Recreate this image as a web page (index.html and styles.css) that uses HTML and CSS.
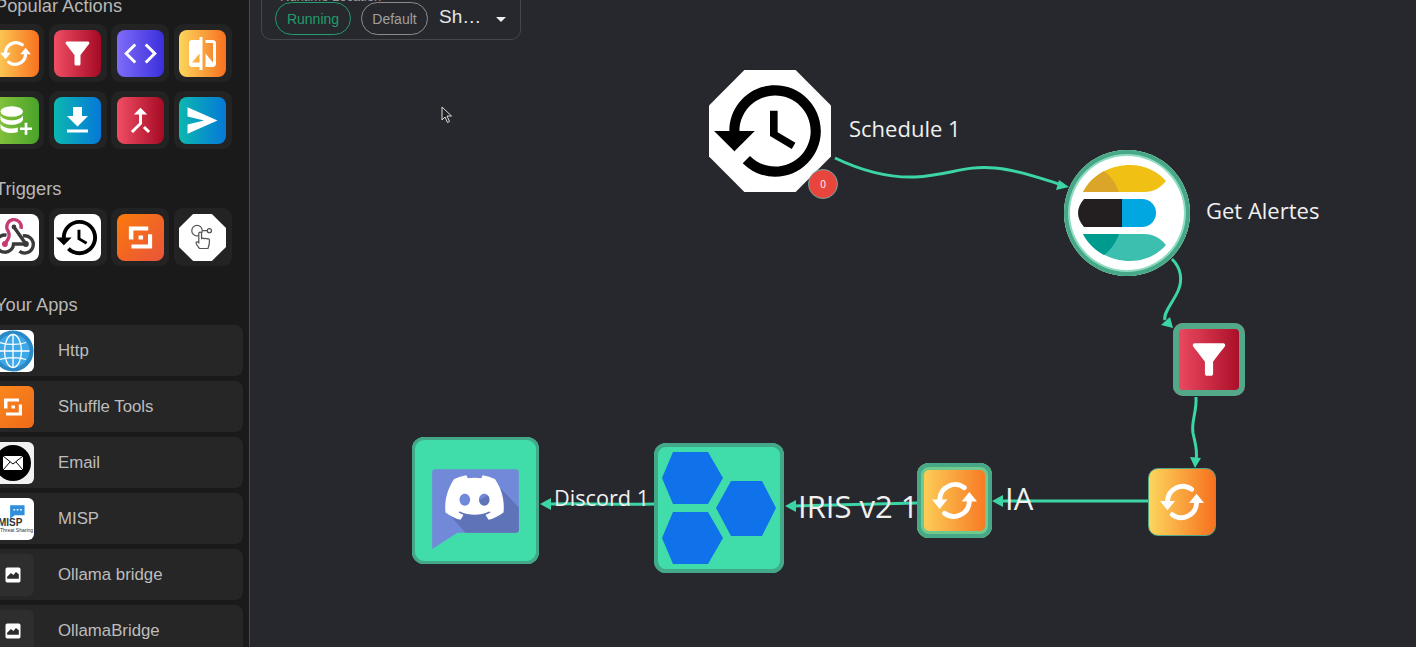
FILE: index.html
```html
<!DOCTYPE html>
<html lang="en">
<head>
    <meta charset="UTF-8">
    <title>Workflow editor</title>
    <link rel="stylesheet" href="styles.css">
</head>
<body>
    <svg class="defs">
        <symbol id="i-sync" viewBox="0 0 24 24">
            <path d="M16.5 6.2A7 7 0 0 0 5.3 11.500" fill="none" stroke="#fff" stroke-width="2.200" stroke-linecap="round"/>
            <path d="M1.800 11.500h7l-3.500 4.300z" fill="#fff"/>
            <path d="M7.500 17.800A7 7 0 0 0 18.700 12.500" fill="none" stroke="#fff" stroke-width="2.200" stroke-linecap="round"/>
            <path d="M15.200 12.500h7l-3.500-4.300z" fill="#fff"/>
        </symbol>
        <symbol id="i-filter" viewBox="0 0 24 24">
            <path d="M4.250 5.610C6.270 8.200 10 13 10 13v6c0 .55.45 1 1 1h2c.55 0 1-.45 1-1v-6s3.720-4.800 5.740-7.390c.51-.66.04-1.610-.79-1.610H5.040c-.83 0-1.300.95-.79 1.610z" fill="#fff"/>
        </symbol>
        <symbol id="i-code" viewBox="0 0 24 24">
            <path d="M8.500 6 2.500 12l6 6M15.500 6l6 6-6 6" fill="none" stroke="#fff" stroke-width="2"/>
        </symbol>
        <symbol id="i-compare" viewBox="0 0 24 24">
            <path d="M10 3H5c-1.100 0-2 .9-2 2v14c0 1.100.9 2 2 2h5v2h2V1h-2v2zm0 15H5l5-6v6zm9-15h-5v2h5v13l-5-6v9h5c1.100 0 2-.9 2-2V5c0-1.100-.9-2-2-2z" fill="#fff"/>
        </symbol>
        <symbol id="i-db" viewBox="0 0 24 24">
            <ellipse cx="9.500" cy="6" rx="7.500" ry="3.500" fill="#fff"/>
            <path d="M2 8.500c1 2.300 4 3.300 7.500 3.300s6.500-1 7.500-3.300v3c-1 2.300-4 3.300-7.500 3.300S3 13.800 2 11.500zM2 14c1 2.300 4 3.300 7.500 3.300 1.500 0 2.800-.2 4-.6v3c-1.200.4-2.500.6-4 .6-3.500 0-6.500-1-7.500-3.300z" fill="#fff"/>
            <path d="M19 13.500v8M15 17.500h8" stroke="#fff" stroke-width="1.800"/>
        </symbol>
        <symbol id="i-download" viewBox="0 0 24 24">
            <path d="M19 9h-4V3H9v6H5l7 7 7-7zM5 18v2h14v-2H5z" fill="#fff"/>
        </symbol>
        <symbol id="i-merge" viewBox="0 0 24 24">
            <path d="M17 20.410 18.410 19 15 15.590 13.590 17 17 20.410zM7.500 8H11v5.590L5.590 19 7 20.410l6-6V8h3.500L12 3.500 7.500 8z" fill="#fff"/>
        </symbol>
        <symbol id="i-send" viewBox="0 0 24 24">
            <path d="M2 3.200 22 12 2 20.800v-6.200L13 12 2 9.400z" fill="#fff"/>
        </symbol>
        <symbol id="i-history" viewBox="0 0 24 24">
            <path d="M13 3c-4.970 0-9 4.030-9 9H1l3.890 3.890.07.14L9 12H6c0-3.870 3.130-7 7-7s7 3.130 7 7-3.130 7-7 7c-1.930 0-3.680-.79-4.940-2.060l-1.420 1.420C8.270 19.990 10.510 21 13 21c4.970 0 9-4.030 9-9s-4.030-9-9-9zm-1 5v5l4.280 2.540.72-1.210-3.500-2.080V8H12z" fill="#000"/>
        </symbol>
        <symbol id="i-webhook" viewBox="0 0 24 24">
            <g fill="none" stroke-width="1.700">
                <path d="M11.200 6.600 17.300 15.300M15.800 11.200A4.400 4.400 0 1 1 14 19" stroke="#3a3a3a"/>
                <path d="M7.400 10.800A4.400 4.400 0 1 0 11 15.300H17.300" stroke="#3a3a3a"/>
                <path d="M6.600 15.300C8.200 12.800 9.600 11.500 8.300 8.800A3.700 3.700 0 1 1 14.800 7.600" stroke="#c73a73"/>
            </g>
            <circle cx="6.600" cy="15.300" r="1.500" fill="#c73a73"/>
            <circle cx="17.300" cy="15.300" r="1.500" fill="#3a3a3a"/>
            <circle cx="11.200" cy="6.600" r="1.200" fill="#3a3a3a"/>
        </symbol>
        <symbol id="i-shuffle" viewBox="0 0 24 24">
            <path d="M3 3.500h15v3H6.500v7H3zM21 9.500v11H5v-3h12.800v-8zM10.500 10.500h3.500v3h-3.500z" fill="#fff"/>
        </symbol>
        <symbol id="i-touch" viewBox="0 0 24 24">
            <circle cx="8" cy="7" r="3.800" fill="none" stroke="#555" stroke-width=".9"/>
            <circle cx="17" cy="7" r="1.500" fill="none" stroke="#555" stroke-width=".9"/>
            <path d="M11.800 7h3.700" stroke="#555" stroke-width=".9"/>
            <path d="M9.800 20c-1-1.500-2.500-3-2.500-4s1-1 2-.2V9c0-1.200 2-1.200 2 0v4.200c0-1 2-1 2 0 0-.8 2-.8 2 .2 .2-.8 1.800-.6 1.800.4 0 2-.2 4-1.100 6.200z" fill="#fff" stroke="#555" stroke-width=".9"/>
        </symbol>
        <symbol id="i-image" viewBox="0 0 24 24">
            <path d="M5 3h14a2 2 0 0 1 2 2v14a2 2 0 0 1-2 2H5a2 2 0 0 1-2-2V5a2 2 0 0 1 2-2zm0 11v2.500h14V11l-3.500-2.500-3 3.500-3-2.500z" fill="#fff" fill-rule="evenodd"/>
        </symbol>
    </svg>

    <div class="page">
        <aside class="sidebar">
            <div class="sidebar-inner">
                <h3 class="section-title first">Popular Actions</h3>
                <div class="tile-grid">
                    <div class="tile"><span class="tile-icon orange"><svg><use href="#i-sync"/></svg></span></div>
                    <div class="tile"><span class="tile-icon red"><svg><use href="#i-filter"/></svg></span></div>
                    <div class="tile"><span class="tile-icon purple"><svg><use href="#i-code"/></svg></span></div>
                    <div class="tile"><span class="tile-icon orange"><svg><use href="#i-compare"/></svg></span></div>
                    <div class="tile"><span class="tile-icon green"><svg><use href="#i-db"/></svg></span></div>
                    <div class="tile"><span class="tile-icon teal"><svg><use href="#i-download"/></svg></span></div>
                    <div class="tile"><span class="tile-icon red"><svg><use href="#i-merge"/></svg></span></div>
                    <div class="tile"><span class="tile-icon teal"><svg><use href="#i-send"/></svg></span></div>
                </div>

                <h3 class="section-title triggers">Triggers</h3>
                <div class="tile-grid">
                    <div class="tile"><span class="tile-icon white full"><svg><use href="#i-webhook"/></svg></span></div>
                    <div class="tile"><span class="tile-icon white full"><svg><use href="#i-history"/></svg></span></div>
                    <div class="tile"><span class="tile-icon shuffle"><svg><use href="#i-shuffle"/></svg></span></div>
                    <div class="tile"><span class="tile-icon white octagon"><svg><use href="#i-touch"/></svg></span></div>
                </div>

                <h3 class="section-title apps">Your Apps</h3>
                <div class="app-list">
                    <div class="app-row">
                        <span class="app-icon white">
                            <svg viewBox="0 0 42 42">
                                <circle cx="21" cy="21" r="18.500" fill="#3fa9e8" stroke="#2b8ac6" stroke-width="4"/>
                                <g fill="none" stroke="#fff" stroke-width="1.300">
                                    <ellipse cx="21" cy="21" rx="8.500" ry="16.500"/>
                                    <path d="M21 4v34M4.500 21h33M8 12.500c7 2.500 19 2.500 26 0M8 29.500c7-2.500 19-2.500 26 0"/>
                                </g>
                            </svg>
                        </span>
                        <span class="app-name">Http</span>
                    </div>
                    <div class="app-row">
                        <span class="app-icon shuffle-app"><svg class="inset-icon"><use href="#i-shuffle"/></svg></span>
                        <span class="app-name">Shuffle Tools</span>
                    </div>
                    <div class="app-row">
                        <span class="app-icon paper">
                            <svg viewBox="0 0 42 42">
                                <circle cx="21" cy="21" r="18" fill="#000"/>
                                <rect x="11" y="14" width="20" height="14" fill="#fff"/>
                                <path d="M11 14l10 8 10-8M11 28l7-8M31 28l-7-8" fill="none" stroke="#000" stroke-width="1"/>
                            </svg>
                        </span>
                        <span class="app-name">Email</span>
                    </div>
                    <div class="app-row">
                        <span class="app-icon white misp">
                            <svg class="misp-bubble" viewBox="0 0 18 14">
                                <path d="M1 1h13v9H5l-4 3z" fill="#2f8fdc"/>
                                <path d="M4 5h1.500M7 5h1.500M10 5h1.500" stroke="#fff" stroke-width="1.200"/>
                            </svg>
                            <span class="misp-word">MISP</span>
                            <span class="misp-sub">Threat Sharing</span>
                        </span>
                        <span class="app-name">MISP</span>
                    </div>
                    <div class="app-row">
                        <span class="app-icon blank"><svg class="blank-icon"><use href="#i-image"/></svg></span>
                        <span class="app-name">Ollama bridge</span>
                    </div>
                    <div class="app-row">
                        <span class="app-icon blank"><svg class="blank-icon"><use href="#i-image"/></svg></span>
                        <span class="app-name">OllamaBridge</span>
                    </div>
                </div>
            </div>
        </aside>

        <main class="canvas">
            <div class="runtime">
                <div class="runtime-label">Runtime Location</div>
                <div class="runtime-row">
                    <span class="chip chip-green">Running</span>
                    <span class="chip chip-gray">Default</span>
                    <span class="runtime-value">Sh…</span>
                    <span class="caret"></span>
                </div>
            </div>

            <svg class="edges" viewBox="250 0 1166 647">
                <g fill="none" stroke="#3cd5a5" stroke-width="3">
                    <path d="M835 158C860 170 885 178 915 177C950 175 965 165 995 168C1020 170 1045 180 1062 185"/>
                    <path d="M1172 259C1181 268 1183 280 1178 291C1172 304 1163 313 1165 320"/>
                    <path d="M1196 397C1197 412 1191 421 1193 433C1195 443 1198 450 1196 460"/>
                    <path d="M1148 501H1000"/>
                    <path d="M917 503 792 506"/>
                    <path d="M654 504C620 505 585 503 548 504"/>
                </g>
                <g fill="#3cd5a5">
                    <path d="M1069 187 1056 190 1059 180z"/>
                    <path d="M1173 328 1161 325 1170 317z"/>
                    <path d="M1195 468 1190 457 1201 458z"/>
                    <path d="M992 501 1003 495V507z"/>
                    <path d="M785 506 796 500V512z"/>
                    <path d="M540 504 551 498V510z"/>
                </g>
            </svg>

            <div class="node node-schedule"><svg><use href="#i-history"/></svg></div>
            <span class="badge">0</span>
            <span class="node-label label-schedule">Schedule 1</span>

            <div class="node node-elastic">
                <svg viewBox="0 0 126 126">
                    <path d="M19 42C27 25 47 15 66 15C82 15 94 22 102 31C96 38 90 42 80 42Z" fill="#f0c015"/>
                    <path d="M19 42C24 33 31 26 40 21C48 27 52 34 55 42Z" fill="#dba52a"/>
                    <path d="M20 49H58V77H20C12 68 12 58 20 49Z" fill="#231f20"/>
                    <path d="M58 49H78A14 14 0 0 1 78 77H58Z" fill="#00a7e1"/>
                    <path d="M19 84C27 101 47 111 66 111C82 111 94 104 102 95C96 88 90 84 80 84Z" fill="#3dbfb0"/>
                    <path d="M19 84C24 93 31 100 40 105C48 99 52 92 55 84Z" fill="#009b8f"/>
                </svg>
            </div>
            <span class="node-label label-elastic">Get Alertes</span>

            <div class="node node-filter"><svg><use href="#i-filter"/></svg></div>
            <div class="node node-start"><svg><use href="#i-sync"/></svg></div>
            <div class="node node-ia"><svg><use href="#i-sync"/></svg></div>
            <span class="node-label big label-ia">IA</span>

            <div class="node node-iris">
                <svg viewBox="0 0 130 130">
                    <g fill="#0f72ea">
                        <path d="M8 35 19 9H54L69 35 54 61H19z"/>
                        <path d="M62 65 77 38H108L122 65 108 93H77z"/>
                        <path d="M8 95 19 69H54L69 95 54 121H19z"/>
                    </g>
                </svg>
            </div>
            <span class="node-label big label-iris">IRIS v2 1</span>

            <div class="node node-discord">
                <svg viewBox="0 0 126 126">
                    <path d="M23 32H103a3 3 0 0 1 3 3V92a3 3 0 0 1-3 3H45L20 111V35a3 3 0 0 1 3-3z" fill="#7289da"/>
                    <path d="M88 51 106 70V92a3 3 0 0 1-3 3H53L38 78z" fill="#5f73b8"/>
                    <path transform="translate(33 31) scale(2.42)" fill="#fff" d="M20.317 4.3698a19.7913 19.7913 0 00-4.8851-1.5152.0741.0741 0 00-.0785.0371c-.211.3753-.4447.8648-.6083 1.2495-1.8447-.2762-3.68-.2762-5.4868 0-.1636-.3933-.4058-.8742-.6177-1.2495a.077.077 0 00-.0785-.037 19.7363 19.7363 0 00-4.8852 1.515.0699.0699 0 00-.0321.0277C.5334 9.0458-.319 13.5799.0992 18.0578a.0824.0824 0 00.0312.0561c2.0528 1.5076 4.0413 2.4228 5.9929 3.0294a.0777.0777 0 00.0842-.0276c.4616-.6304.8731-1.2952 1.226-1.9942a.076.076 0 00-.0416-.1057c-.6528-.2476-1.2743-.5495-1.8722-.8923a.077.077 0 01-.0076-.1277c.1258-.0943.2517-.1923.3718-.2914a.0743.0743 0 01.0776-.0105c3.9278 1.7933 8.18 1.7933 12.0614 0a.0739.0739 0 01.0785.0095c.1202.099.246.1981.3728.2924a.077.077 0 01-.0066.1276 12.2986 12.2986 0 01-1.873.8914.0766.0766 0 00-.0407.1067c.3604.698.7719 1.3628 1.225 1.9932a.076.076 0 00.0842.0286c1.961-.6067 3.9495-1.5219 6.0023-3.0294a.077.077 0 00.0313-.0552c.5004-5.177-.8382-9.6739-3.5485-13.6604a.061.061 0 00-.0312-.0286zM8.02 15.3312c-1.1825 0-2.1569-1.0857-2.1569-2.419 0-1.3332.9555-2.4189 2.157-2.4189 1.2108 0 2.1757 1.0952 2.1568 2.419 0 1.3332-.9555 2.4189-2.1569 2.4189zm7.9748 0c-1.1825 0-2.1569-1.0857-2.1569-2.419 0-1.3332.9554-2.4189 2.1569-2.4189 1.2108 0 2.1757 1.0952 2.1568 2.419 0 1.3332-.946 2.4189-2.1568 2.4189Z"/>
                </svg>
            </div>
            <span class="node-label label-discord">Discord 1</span>

            <svg class="cursor" viewBox="0 0 12 18">
                <path d="M1 1v13l3-3 2.500 5.500 2-1L6 10h4.500z" fill="#222" stroke="#ddd" stroke-width="1"/>
            </svg>
        </main>
    </div>
</body>
</html>
```

FILE: styles.css
```css
html, body {
    margin: 0;
    height: 100%;
    overflow: hidden;
    background-color: #27282d;
    font-family: "Liberation Sans", Arial, sans-serif;
}
.defs {
    display: none;
}
.page {
    display: flex;
    height: 647px;
}

/* left panel */
.sidebar {
    width: 249px;
    flex-shrink: 0;
    overflow: hidden;
    background-color: #1a1a1a;
    border-right: 1px solid #4a4a4f;
}
.sidebar-inner {
    width: 257px;
    margin-left: -14px;
}
.section-title {
    margin: 0 0 8px 9px;
    height: 20px;
    font-size: 18.300px;
    line-height: 20px;
    font-weight: 400;
    color: #b8b8b8;
}
.section-title.first {
    margin-top: -4px;
}
.section-title.triggers {
    margin-top: 30px;
    margin-bottom: 9px;
}
.section-title.apps {
    margin-top: 29px;
    margin-bottom: 10px;
}
.tile-grid {
    display: grid;
    grid-template-columns: repeat(4, 58px);
    gap: 9px 4.5px;
}
.tile {
    height: 58px;
    padding: 6px 5.5px 5px;
    box-sizing: border-box;
    background-color: #232323;
    border-radius: 9px;
}
.tile-icon {
    display: block;
    width: 47px;
    height: 47px;
    border-radius: 8px;
}
.tile-icon svg {
    display: block;
    width: 100%;
    height: 100%;
    padding: 5.5px;
    box-sizing: border-box;
}
.tile-icon.full svg {
    padding: 0;
}
.orange { background: linear-gradient(to right, #fcd65c, #f7711f); }
.red { background: linear-gradient(to right, #f04e64, #a50a24); }
.purple { background: linear-gradient(to right, #7f6cf8, #3a2fdc); }
.green { background: linear-gradient(to right, #8cc63f, #4aa32a); }
.teal { background: linear-gradient(to right, #0cb8b0, #0578d8); }
.shuffle { background: linear-gradient(135deg, #fb7a0c, #e8543a); }
.white { background: #fff; }
.tile-icon.shuffle svg {
    padding: 8px;
}
.octagon {
    border-radius: 0;
    clip-path: polygon(30% 0, 70% 0, 100% 30%, 100% 70%, 70% 100%, 30% 100%, 0 70%, 0 30%);
}
.tile-icon.octagon svg {
    padding: 7px;
}

.app-list {
    display: flex;
    flex-direction: column;
    gap: 5px;
}
.app-row {
    display: flex;
    align-items: center;
    flex-shrink: 0;
    height: 51px;
    gap: 24px;
    padding-left: 6px;
    background-color: #262626;
    border-radius: 8px;
}
.app-icon {
    position: relative;
    display: flex;
    align-items: center;
    justify-content: center;
    flex-shrink: 0;
    width: 42px;
    height: 42px;
    border-radius: 6px;
    overflow: hidden;
}
.app-icon > svg {
    width: 42px;
    height: 42px;
}
.shuffle-app {
    background: linear-gradient(135deg, #fb8a1c, #ee6a1a);
}
.app-icon > .inset-icon {
    width: 24px;
    height: 24px;
}
.paper {
    background: #f2f2f2;
}
.blank {
    background: #2e2e2e;
}
.app-icon > .blank-icon {
    width: 20px;
    height: 20px;
}
.misp {
    display: block;
    color: #333;
}
.app-icon > .misp-bubble {
    position: absolute;
    top: 6px;
    left: 17px;
    width: 20px;
    height: 16px;
}
.misp-word {
    position: absolute;
    top: 20px;
    left: 6px;
    font-size: 10px;
    line-height: 10px;
    font-weight: 700;
}
.misp-sub {
    position: absolute;
    top: 29px;
    left: 8px;
    font-size: 5px;
    line-height: 6px;
    white-space: nowrap;
}
.app-name {
    font-size: 16.800px;
    color: #bdbdbd;
}

/* graph */
.canvas {
    position: relative;
    flex: 1;
    overflow: hidden;
    background-color: #27282d;
}
.runtime {
    position: absolute;
    top: -20px;
    left: 11px;
    width: 260px;
    height: 60px;
    box-sizing: border-box;
    padding: 10px 0 0 13px;
    border: 1px solid #45464c;
    border-radius: 10px;
}
.runtime-label {
    height: 11px;
    padding-left: 5px;
    font-size: 13px;
    line-height: 12px;
    color: #9a9a9a;
}
.runtime-row {
    display: flex;
    align-items: center;
    gap: 10px;
}
.chip {
    display: flex;
    align-items: center;
    justify-content: center;
    height: 33px;
    box-sizing: border-box;
    background-color: #27282d;
    border-radius: 17px;
    font-size: 14px;
}
.chip-green {
    width: 76px;
    color: #1f9d6a;
    border: 1px solid #1f9d6a;
}
.chip-gray {
    width: 67px;
    color: #a0a0a0;
    border: 1px solid #8c8c8c;
}
.runtime-value {
    margin: -4px 0 0 1px;
    font-size: 19px;
    color: #e6e6e6;
}
.caret {
    margin: 2px 0 0 5px;
    border-left: 5px solid transparent;
    border-right: 5px solid transparent;
    border-top: 5px solid #eee;
}

.edges {
    position: absolute;
    top: 0;
    left: 0;
    width: 1166px;
    height: 647px;
}
.node {
    position: absolute;
    box-sizing: border-box;
}
.node svg {
    display: block;
    width: 100%;
    height: 100%;
}
.node-schedule {
    left: 459px;
    top: 70px;
    width: 122px;
    height: 122px;
    background: #fff;
    clip-path: polygon(29% 0, 71% 0, 100% 29%, 100% 71%, 71% 100%, 29% 100%, 0 71%, 0 29%);
}
.badge {
    position: absolute;
    left: 558px;
    top: 169px;
    display: flex;
    align-items: center;
    justify-content: center;
    width: 30px;
    height: 30px;
    box-sizing: border-box;
    background: #e8453c;
    border: 1px solid #6fa5a5;
    border-radius: 50%;
    font-family: "Open Sans", sans-serif;
    font-size: 10px;
    color: #fff;
}
.node-elastic {
    left: 814px;
    top: 150px;
    width: 126px;
    height: 126px;
    background: #fff;
    border-radius: 50%;
    box-shadow: inset 0 0 0 4px #46a886, inset 0 0 0 6px #8fdcc0;
}
.node-filter {
    left: 923px;
    top: 323px;
    width: 72px;
    height: 73px;
    padding: 12px 11px;
    background: linear-gradient(to right, #f04e64, #a50a24);
    border-radius: 10px;
    box-shadow: inset 0 0 0 6px #52a888;
}
.node-start {
    left: 898px;
    top: 468px;
    width: 68px;
    height: 68px;
    padding: 7px;
    background: linear-gradient(to right, #fcd65c, #f7711f);
    border: 1px solid #52a888;
    border-radius: 10px;
}
.node-ia {
    left: 667px;
    top: 463px;
    width: 75px;
    height: 75px;
    padding: 11px;
    background: linear-gradient(to right, #fcd65c, #f7711f);
    border-radius: 12px;
    box-shadow: inset 0 0 0 4px #46a886, inset 0 0 0 7px #72c98e;
}
.node-iris {
    left: 404px;
    top: 443px;
    width: 130px;
    height: 130px;
    background: #40dcaa;
    border-radius: 12px;
    box-shadow: inset 0 0 0 4px #43a888;
}
.node-discord {
    left: 162px;
    top: 437px;
    width: 127px;
    height: 127px;
    background: #40dcaa;
    border-radius: 12px;
    box-shadow: inset 0 0 0 3px #43a888;
}
.node-label {
    position: absolute;
    font-family: "Open Sans", sans-serif;
    font-size: 22px;
    line-height: 30px;
    color: #f0f0f0;
    white-space: nowrap;
}
.node-label.big {
    font-size: 31px;
    line-height: 38px;
}
.label-schedule { left: 599px; top: 113px; }
.label-elastic { left: 956px; top: 195px; }
.label-discord { left: 304px; top: 483px; font-size: 21.700px; }
.label-iris { left: 548px; top: 487px; }
.label-ia { left: 755px; top: 479px; }
.cursor {
    position: absolute;
    left: 191px;
    top: 106px;
    width: 12px;
    height: 18px;
}
```
